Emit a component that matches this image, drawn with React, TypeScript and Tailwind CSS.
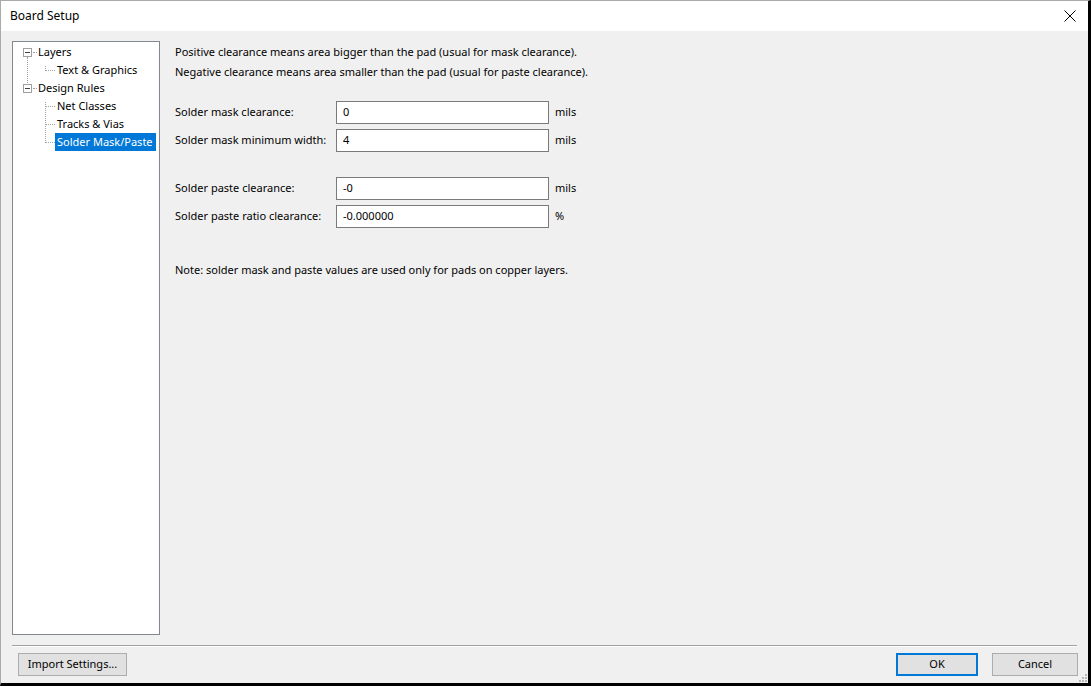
import React from "react";

const font = { fontFamily: '"Noto Sans", "Open Sans", sans-serif' };

function Expander() {
  return (
    <span className="relative inline-flex h-[9px] w-[9px] items-center justify-center border border-[#a0a0a0] bg-white">
      <span className="h-px w-[5px] bg-[#404040]" />
    </span>
  );
}

function TreeRow({
  level,
  label,
  expander,
  selected,
}: {
  level: number;
  label: string;
  expander?: boolean;
  selected?: boolean;
}) {
  return (
    <div className="relative flex h-[18px] items-center whitespace-nowrap">
      {level === 0 ? (
        <>
          <span className="ml-[10px] flex h-[9px] w-[9px]">{expander && <Expander />}</span>
          <span className="ml-px h-0 w-[4px] border-t border-dotted border-[#a0a0a0]" />
          <span className="ml-[-1px] px-[2px] text-[11px] text-black">{label}</span>
        </>
      ) : (
        <>
          <span className="ml-[33px] h-0 w-[9px] border-t border-dotted border-[#a0a0a0]" />
          <span
            className={
              "flex h-[18px] items-center px-[2px] text-[11px] " +
              (selected ? "w-[101px] bg-[#0078d7] text-white" : "text-black")
            }
          >
            {label}
          </span>
        </>
      )}
    </div>
  );
}

function Field({ label, value, unit }: { label: string; value: string; unit: string }) {
  return (
    <div className="flex h-[28px] items-center whitespace-nowrap">
      <span className="w-[161px] text-[11px] text-black">{label}</span>
      <div className="flex h-[23px] w-[213px] items-center border border-[#7a7a7a] bg-white px-[6px] text-[11px] text-black">
        {value}
      </div>
      <span className="ml-[6px] text-[11px] text-black">{unit}</span>
    </div>
  );
}

export default function App() {
  return (
    <div
      className="flex h-[686px] w-[1091px] flex-col border-l border-t border-[#aaaaaa] border-r-[3px] border-r-black border-b-[3px] border-b-black bg-[#f0f0f0]"
      style={font}
    >
      {/* title bar */}
      <div className="flex h-[30px] shrink-0 items-center justify-between bg-white pl-[9px] pr-[8px]">
        <span className="text-[12px] text-black">Board Setup</span>
        <svg width="12" height="12" viewBox="0 0 12 12" className="mr-[4px]">
          <path d="M0.5 0.5 L11.5 11.5 M11.5 0.5 L0.5 11.5" stroke="#000" strokeWidth="1" />
        </svg>
      </div>

      <div className="flex min-h-0 flex-1 flex-col px-[11px] pt-[10px]">
        <div className="flex min-h-0 flex-1">
          {/* tree */}
          <div className="relative w-[148px] border border-[#828790] bg-white pt-[1px]">
            <div className="absolute left-[14px] top-[15px] h-[32px] border-l border-dotted border-[#a0a0a0]" />
            <div className="absolute left-[32px] top-[24px] h-[5px] border-l border-dotted border-[#a0a0a0]" />
            <div className="absolute left-[32px] top-[60px] h-[41px] border-l border-dotted border-[#a0a0a0]" />
            <TreeRow level={0} label="Layers" expander />
            <TreeRow level={1} label="Text & Graphics" />
            <TreeRow level={0} label="Design Rules" expander />
            <TreeRow level={1} label="Net Classes" />
            <TreeRow level={1} label="Tracks & Vias" />
            <TreeRow level={1} label="Solder Mask/Paste" selected />
          </div>

          {/* content */}
          <div className="flex flex-1 flex-col whitespace-nowrap pl-[15px] pt-[1px] text-[11px] text-black">
            <div className="flex h-[20px] items-center">
              Positive clearance means area bigger than the pad (usual for mask clearance).
            </div>
            <div className="flex h-[20px] items-center">
              Negative clearance means area smaller than the pad (usual for paste clearance).
            </div>
            <div className="mt-[16px]">
              <Field label="Solder mask clearance:" value="0" unit="mils" />
              <Field label="Solder mask minimum width:" value="4" unit="mils" />
            </div>
            <div className="mt-[20px]">
              <Field label="Solder paste clearance:" value="-0" unit="mils" />
              <Field label="Solder paste ratio clearance:" value="-0.000000" unit="%" />
            </div>
            <div className="mt-[30px] flex h-[20px] items-center">
              Note: solder mask and paste values are used only for pads on copper layers.
            </div>
          </div>
        </div>

        {/* separator */}
        <div className="mt-[10px] h-[2px] shrink-0 border-t border-[#a0a0a0] border-b border-b-white" />

        {/* buttons */}
        <div className="relative flex h-[36px] shrink-0 items-start justify-between pl-[6px] pt-[6px]">
          <button className="flex h-[23px] w-[109px] items-center justify-center border border-[#adadad] bg-[#e1e1e1] text-[11px] text-black">
            Import Settings...
          </button>
          <div className="mr-[-1px] flex gap-[14px]">
            <button className="flex h-[23px] w-[82px] items-center justify-center border-2 border-[#0078d7] bg-[#e1e1e1] text-[11px] text-black">
              OK
            </button>
            <button className="flex h-[23px] w-[86px] items-center justify-center border border-[#adadad] bg-[#e1e1e1] text-[11px] text-black">
              Cancel
            </button>
          </div>
          <svg
            width="10"
            height="10"
            viewBox="0 0 10 10"
            className="absolute bottom-[0px] right-[-11px]"
          >
            {[
              [7, 1],
              [7, 4],
              [4, 4],
              [7, 7],
              [4, 7],
              [1, 7],
            ].map(([x, y], i) => (
              <rect key={i} x={x} y={y} width="2" height="2" fill="#b8b8b8" />
            ))}
          </svg>
        </div>
      </div>
    </div>
  );
}
